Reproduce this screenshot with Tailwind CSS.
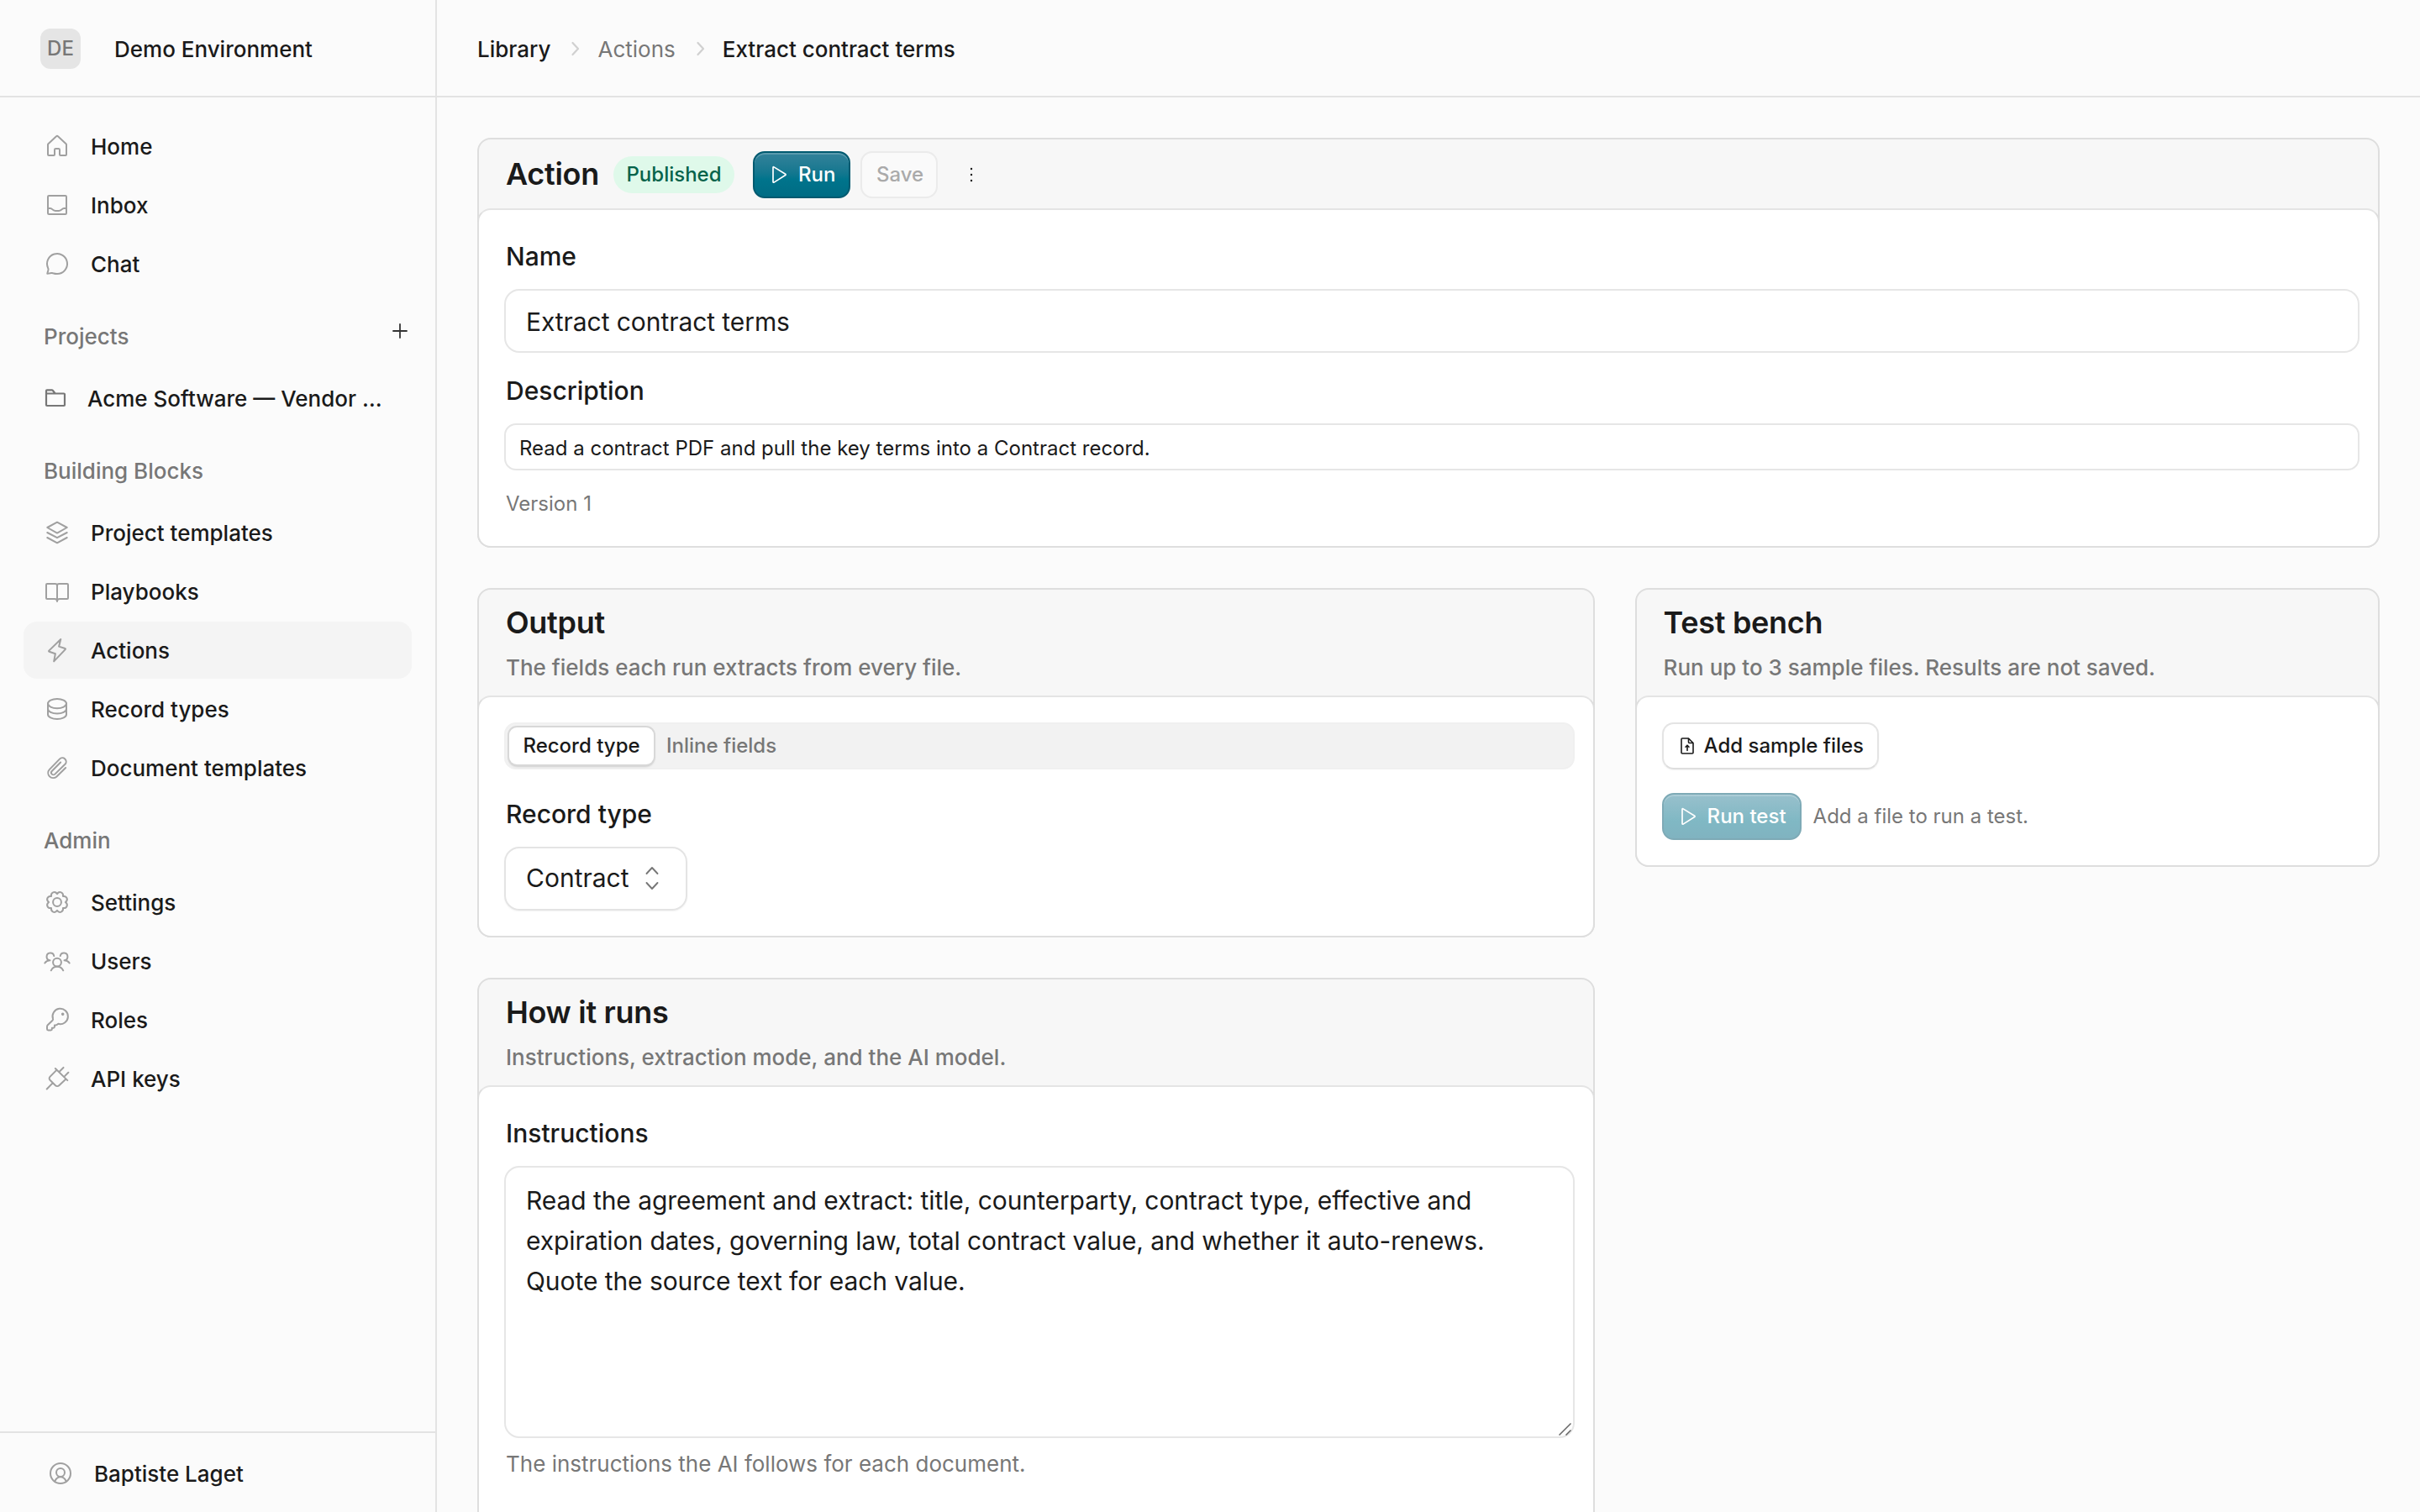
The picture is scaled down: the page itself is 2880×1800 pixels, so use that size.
<!DOCTYPE html>
<html lang="en">
<head>
  <meta charset="UTF-8">
  <meta name="viewport" content="width=device-width, initial-scale=1">
  <title>Extract contract terms</title>
  <script src="https://cdn.jsdelivr.net/npm/@tailwindcss/browser@4"></script>
</head>
<body class="flex h-screen overflow-hidden bg-[#fbfbfb] font-['Inter',sans-serif] text-[26px] leading-9 text-[#1a1a1a]">

  <!-- Sidebar -->
  <aside class="flex w-[520px] shrink-0 flex-col border-r-2 border-[#e3e3e3] font-medium">
    <div class="flex h-[116px] items-center border-b-2 border-[#e3e3e3] pt-0.5 pl-12">
      <div class="flex size-12 items-center justify-center rounded-xl bg-[#e5e5e5] text-2xl text-[#777]">DE</div>
      <div class="ml-10 pt-0.5">Demo Environment</div>
    </div>

    <nav class="flex flex-1 flex-col px-7 pt-6">
      <div class="flex flex-col gap-0.5">
        <a class="flex h-[68px] items-center gap-6 rounded-2xl px-6">
          <svg class="size-8 shrink-0 text-[#a0a0a0]" viewBox="0 0 24 24" fill="none" stroke="currentColor" stroke-width="1.5" stroke-linecap="round" stroke-linejoin="round"><path d="M3.75 10.6a1 1 0 0 1 .3-.7l7.25-6.7a1 1 0 0 1 1.4 0l7.25 6.7a1 1 0 0 1 .3.7v8.9a.75.75 0 0 1-.75.75h-4.5a.75.75 0 0 1-.75-.75v-4.25a1 1 0 0 0-1-1h-2.5a1 1 0 0 0-1 1v4.25a.75.75 0 0 1-.75.75H4.5a.75.75 0 0 1-.75-.75z"/></svg>
          <span class="pt-0.5">Home</span>
        </a>
        <a class="flex h-[68px] items-center gap-6 rounded-2xl px-6">
          <svg class="size-8 shrink-0 text-[#a0a0a0]" viewBox="0 0 24 24" fill="none" stroke="currentColor" stroke-width="1.5" stroke-linecap="round" stroke-linejoin="round"><rect x="3.75" y="3.75" width="16.5" height="16.5" rx=".9"/><path d="M3.75 15h2.1c.8 0 1.3.3 1.8.9.7.8 1.6 1.35 2.8 1.35h3.1c1.2 0 2.1-.55 2.8-1.35.5-.6 1-.9 1.8-.9h2.1"/></svg>
          <span class="pt-0.5">Inbox</span>
        </a>
        <a class="flex h-[68px] items-center gap-6 rounded-2xl px-6">
          <svg class="size-8 shrink-0 text-[#a0a0a0]" viewBox="0 0 24 24" fill="none" stroke="currentColor" stroke-width="1.5" stroke-linecap="round" stroke-linejoin="round"><path d="M12 21a9 9 0 1 0-8.1-5.1c.3.5.3 1 .2 1.5l-.9 3.5 3.7-.7c.5-.1 1 0 1.5.2 1.1.4 2.3.6 3.6.6z"/></svg>
          <span class="pt-0.5">Chat</span>
        </a>
      </div>

      <div class="flex h-[92px] items-start justify-between pr-1 pl-6 text-[#777]">
        <span class="mt-[35px]">Projects</span>
        <svg class="mt-[36px] size-5 text-[#333]" viewBox="0 0 20 20" fill="none" stroke="currentColor" stroke-width="1.8" stroke-linecap="round"><path d="M10 2v16M2 10h16"/></svg>
      </div>
      <a class="flex h-[68px] items-center gap-6 rounded-2xl px-6">
        <svg class="size-7 shrink-0 text-[#777]" viewBox="0 0 28 28" fill="none" stroke="currentColor" stroke-width="2.2" stroke-linejoin="round"><path d="M3 8.5V5.3c0-.5.4-.9.9-.9h6c.3 0 .6.1.8.3l3 3.8H24c.6 0 1 .4 1 1V22c0 .6-.4 1-1 1H4c-.6 0-1-.4-1-1zM3 8.5h10.5"/></svg>
        <span class="pt-0.5">Acme Software — Vendor …</span>
      </a>

      <div class="h-[92px] pt-[35px] pl-6 text-[#777]">Building Blocks</div>
      <div class="flex flex-col gap-0.5">
        <a class="flex h-[68px] items-center gap-6 rounded-2xl px-6">
          <svg class="size-8 shrink-0 text-[#a0a0a0]" viewBox="0 0 24 24" fill="none" stroke="currentColor" stroke-width="1.5" stroke-linecap="round" stroke-linejoin="round"><path d="M12 2.8l8.8 4.7-8.8 4.9-8.8-4.9zM3.2 12l8.8 4.6 8.8-4.6M3.2 16.5l8.8 4.7 8.8-4.7"/></svg>
          <span class="pt-0.5">Project templates</span>
        </a>
        <a class="flex h-[68px] items-center gap-6 rounded-2xl px-6">
          <svg class="size-8 shrink-0 text-[#a0a0a0]" viewBox="0 0 24 24" fill="none" stroke="currentColor" stroke-width="1.5" stroke-linecap="round" stroke-linejoin="round"><path d="M12 7c0-1-.8-1.75-1.75-1.75H3a.75.75 0 0 0-.75.75v12c0 .4.3.75.75.75h6.75c1.2 0 2.25.8 2.25 1.9 0-1.1 1-1.9 2.25-1.9H21c.4 0 .75-.3.75-.75V6a.75.75 0 0 0-.75-.75h-7.25C12.8 5.25 12 6 12 7zm0 0v14"/></svg>
          <span class="pt-0.5">Playbooks</span>
        </a>
        <a class="flex h-[68px] items-center gap-6 rounded-2xl bg-[#f4f4f4] px-6">
          <svg class="size-8 shrink-0 text-[#a0a0a0]" viewBox="0 0 24 24" fill="none" stroke="currentColor" stroke-width="1.5" stroke-linecap="round" stroke-linejoin="round"><path d="M15.2 2.3l-1.6 6.4 5.5 1.8c.4.1.5.5.2.8L9.1 22l1.3-6.8-5.5-1.9c-.4-.1-.5-.5-.2-.8z"/></svg>
          <span class="pt-0.5">Actions</span>
        </a>
        <a class="flex h-[68px] items-center gap-6 rounded-2xl px-6">
          <svg class="size-8 shrink-0 text-[#a0a0a0]" viewBox="0 0 24 24" fill="none" stroke="currentColor" stroke-width="1.5" stroke-linecap="round" stroke-linejoin="round"><ellipse cx="12" cy="7.2" rx="8.25" ry="4.2"/><path d="M3.75 7.2v9.6c0 2.3 3.7 4.2 8.25 4.2s8.25-1.9 8.25-4.2V7.2M3.75 12c0 2.3 3.7 4.2 8.25 4.2s8.25-1.9 8.25-4.2"/></svg>
          <span class="pt-0.5">Record types</span>
        </a>
        <a class="flex h-[68px] items-center gap-6 rounded-2xl px-6">
          <svg class="size-8 shrink-0 text-[#a0a0a0]" viewBox="0 0 24 24" fill="none" stroke="currentColor" stroke-width="1.5" stroke-linecap="round" stroke-linejoin="round"><path d="M19.6 12l-8.2 8a4.5 4.5 0 0 1-6.3-6.4l9.1-9.4a3.3 3.3 0 0 1 4.9 4.6L10 17.7a1.9 1.9 0 0 1-2.7-2.7l7.8-7.9"/></svg>
          <span class="pt-0.5">Document templates</span>
        </a>
      </div>

      <div class="h-[92px] pt-[35px] pl-6 text-[#777]">Admin</div>
      <div class="flex flex-col gap-0.5">
        <a class="flex h-[68px] items-center gap-6 rounded-2xl px-6">
          <svg class="size-8 shrink-0 text-[#a0a0a0]" viewBox="0 0 24 24" fill="none" stroke="currentColor" stroke-width="1.5" stroke-linejoin="round"><path d="M19.4 12C22.27 13.99 20.67 17.87 17.23 17.23 17.87 20.67 13.99 22.27 12 19.4 10.01 22.27 6.13 20.67 6.77 17.23 3.33 17.87 1.73 13.99 4.6 12 1.73 10.01 3.33 6.13 6.77 6.77 6.13 3.33 10.01 1.73 12 4.6 13.99 1.73 17.87 3.33 17.23 6.77 20.67 6.13 22.27 10.01 19.4 12z"/><circle cx="12" cy="12" r="3.7"/></svg>
          <span class="pt-0.5">Settings</span>
        </a>
        <a class="flex h-[68px] items-center gap-6 rounded-2xl px-6">
          <svg class="size-8 shrink-0 text-[#a0a0a0]" viewBox="0 0 24 24" fill="none" stroke="currentColor" stroke-width="1.5" stroke-linecap="round" stroke-linejoin="round"><circle cx="12" cy="13.2" r="3.7"/><path d="M6.6 20.5c.9-2.1 3-3.5 5.4-3.5s4.5 1.4 5.4 3.5M9.2 7.6a3.3 3.3 0 1 0-3.6 3.9M5.6 11.5c-2 0-3.6.9-4.6 2.4M14.8 7.6a3.3 3.3 0 1 1 3.6 3.9M18.4 11.5c2 0 3.6.9 4.6 2.4"/></svg>
          <span class="pt-0.5">Users</span>
        </a>
        <a class="flex h-[68px] items-center gap-6 rounded-2xl px-6">
          <svg class="size-8 shrink-0 text-[#a0a0a0]" viewBox="0 0 24 24" fill="none" stroke="currentColor" stroke-width="1.5" stroke-linecap="round" stroke-linejoin="round"><path d="M8.3 11.3a6.9 6.9 0 1 1 4.6 4.3c-.6.9-1.3 1.2-2.2 1.2h-1v1.4c0 .6-.5 1.1-1 1.1H7.4v1c0 .6-.4 1-1 1H4c-.6 0-1-.4-1-1v-2.2c0-.5.2-1 .6-1.4l4.3-4.2c.5-.5.6-.8.4-1.2z"/><circle cx="17" cy="7" r=".6" fill="currentColor"/></svg>
          <span class="pt-0.5">Roles</span>
        </a>
        <a class="flex h-[68px] items-center gap-6 rounded-2xl px-6">
          <svg class="size-8 shrink-0 text-[#a0a0a0]" viewBox="0 0 24 24" fill="none" stroke="currentColor" stroke-width="1.5" stroke-linecap="round" stroke-linejoin="round"><path d="M10.4 3l10.8 10.6M17.6 2.2l-3.2 3.2M22 6.6l-3.4 3.4M11.5 4.4l-5.9 6c-.8.8-.8 2.1 0 2.9l4.9 4.9c.8.8 2.4.8 3.2 0l6.2-5.8M7.8 16.2l-5 5.2"/></svg>
          <span class="pt-0.5">API keys</span>
        </a>
      </div>
    </nav>

    <div class="flex h-24 items-start gap-6 border-t-2 border-[#e3e3e3] pt-8 pl-14">
      <svg class="size-8 shrink-0 text-[#a0a0a0]" viewBox="0 0 24 24" fill="none" stroke="currentColor" stroke-width="1.5" stroke-linecap="round"><circle cx="12" cy="12" r="9"/><circle cx="12" cy="11.2" r="3.75"/><path d="M7 18.9c1.1-2.3 2.9-3.7 5-3.7s3.9 1.4 5 3.7"/></svg>
      <span class="-mt-px">Baptiste Laget</span>
    </div>
  </aside>

  <div class="flex min-w-0 flex-1 flex-col">
    <!-- Breadcrumb -->
    <header class="flex h-[116px] shrink-0 items-center gap-4 border-b-2 border-[#e3e3e3] pt-0.5 pl-12 font-medium">
      <span class="pt-0.5">Library</span>
      <svg class="size-6 text-[#d0d0d0]" viewBox="0 0 24 24" fill="none" stroke="currentColor" stroke-width="2.2" stroke-linecap="round" stroke-linejoin="round"><path d="M10.5 5l6.5 7-6.5 7"/></svg>
      <span class="pt-0.5 font-normal text-[#777]">Actions</span>
      <svg class="size-6 text-[#d0d0d0]" viewBox="0 0 24 24" fill="none" stroke="currentColor" stroke-width="2.2" stroke-linecap="round" stroke-linejoin="round"><path d="M10.5 5l6.5 7-6.5 7"/></svg>
      <span class="pt-0.5">Extract contract terms</span>
    </header>

    <main class="flex flex-1 flex-col gap-12 overflow-hidden p-12">
      <!-- Action -->
      <section class="shrink-0 rounded-2xl border-2 border-[#dedede] bg-[#f7f7f7]">
        <div class="flex h-[82px] items-center pt-0.5 pl-8">
          <h1 class="w-28 pb-0.5 text-4xl font-semibold tracking-[-0.3px]">Action</h1>
          <span class="ml-4 flex h-11 w-36 items-center justify-center rounded-full bg-[#dff9ea] text-2xl font-medium text-[#06634a]">Published</span>
          <button class="ml-[22px] flex h-14 w-[116px] items-center gap-[9px] rounded-[14px] border-2 border-[#005a70] bg-linear-to-b from-[#32829a] via-[#00748c] via-60% to-[#006c84] pl-[15px] text-2xl font-medium text-white inset-shadow-[0_2px_0_rgb(255_255_255/0.2)]">
            <svg class="size-7" viewBox="0 0 28 28" fill="none" stroke="currentColor" stroke-width="1.7" stroke-linejoin="round"><path d="M7 5.5c0-.6.6-1 1.1-.6l13.6 8.4c.5.3.5 1 0 1.3L8.1 23.1c-.5.3-1.1 0-1.1-.6z"/></svg>
            Run
          </button>
          <button class="ml-3 flex h-14 w-[92px] items-center justify-center rounded-[14px] border-2 border-[#ebebeb] bg-[#fafafa] pl-0.5 text-2xl font-medium text-[#aaa]">Save</button>
          <button class="ml-[14px] flex size-[52px] items-center justify-center">
            <svg class="size-6" viewBox="0 0 24 24" fill="currentColor"><circle cx="12" cy="5" r="1.2"/><circle cx="12" cy="12" r="1.2"/><circle cx="12" cy="19" r="1.2"/></svg>
          </button>
        </div>
        <div class="-mx-0.5 -mb-0.5 rounded-2xl border-2 border-[#dedede] border-t-[#e4e4e4] bg-white px-[30px] pb-8">
          <label class="mt-[34px] block pl-0.5 text-3xl leading-[42px] font-medium">Name</label>
          <input type="text" value="Extract contract terms" class="mt-[18px] block h-[76px] w-[2208px] rounded-[18px] border-2 border-[#e6e6e6] px-6 pt-0.5 text-3xl tracking-[-0.07px]">
          <label class="mt-6 block pl-0.5 text-3xl leading-[42px] font-medium">Description</label>
          <input type="text" value="Read a contract PDF and pull the key terms into a Contract record." class="mt-[18px] block h-14 w-[2208px] rounded-[14px] border-2 border-[#e6e6e6] px-4 pt-0.5 text-2xl">
          <p class="mt-[21px] pl-0.5 text-2xl leading-[37px] text-[#777]">Version 1</p>
        </div>
      </section>

      <div class="grid shrink-0 grid-cols-[3fr_2fr] items-start gap-12">
        <div class="flex flex-col gap-12">
          <!-- Output -->
          <section class="rounded-2xl border-2 border-[#dedede] bg-[#f7f7f7]">
            <div class="h-[126px] pt-3 pl-8">
              <h2 class="text-4xl leading-[54px] font-semibold tracking-[-0.3px]">Output</h2>
              <p class="mt-[9px] font-medium text-[#777]">The fields each run extracts from every file.</p>
            </div>
            <div class="-mx-0.5 -mb-0.5 rounded-2xl border-2 border-[#dedede] border-t-[#e4e4e4] bg-white py-[30px] pr-[22px] pl-[30px]">
              <div class="flex h-14 items-center rounded-[14px] border-2 border-[#f0f0f0] bg-[#f2f2f2] pl-1 text-2xl font-medium">
                <button class="h-11 w-[172px] rounded-[9px] bg-white shadow-[0_0_0_2px_#d8d8d8,0_2px_3px_rgb(0_0_0/0.3)]">Record type</button>
                <button class="ml-[15px] text-[#777]">Inline fields</button>
              </div>
              <label class="mt-8 block pl-0.5 text-3xl leading-[42px] font-medium">Record type</label>
              <button class="mt-[18px] flex h-[76px] w-[218px] items-center rounded-[18px] border-2 border-[#e4e4e4] pb-0.5 pl-6 text-3xl shadow-xs">
                Contract
                <svg class="ml-[11px] size-8 text-[#777]" viewBox="0 0 32 32" fill="none" stroke="currentColor" stroke-width="1.9" stroke-linecap="round" stroke-linejoin="round"><path d="M9.5 11l6.5-7 6.5 7M9.5 22l6.5 7 6.5-7"/></svg>
              </button>
            </div>
          </section>

          <!-- How it runs -->
          <section class="rounded-2xl border-2 border-[#dedede] bg-[#f7f7f7]">
            <div class="h-[126px] pt-3 pl-8">
              <h2 class="text-4xl leading-[54px] font-semibold tracking-[-0.3px]">How it runs</h2>
              <p class="mt-[9px] font-medium text-[#777]">Instructions, extraction mode, and the AI model.</p>
            </div>
            <div class="-mx-0.5 -mb-0.5 rounded-2xl border-2 border-[#dedede] border-t-[#e4e4e4] bg-white pr-[22px] pb-24 pl-[30px]">
              <label class="mt-[34px] block pl-0.5 text-3xl leading-[42px] font-medium">Instructions</label>
              <div class="relative mt-[18px]">
                <textarea spellcheck="false" class="block h-[324px] w-full resize-none rounded-[18px] border-2 border-[#e6e6e6] px-6 pt-[15px] text-3xl leading-[48px] tracking-[-0.07px]">Read the agreement and extract: title, counterparty, contract type, effective and expiration dates, governing law, total contract value, and whether it auto-renews. Quote the source text for each value.</textarea>
                <svg class="absolute right-[3px] bottom-[3px] size-4 text-[#666]" viewBox="0 0 16 16" fill="none" stroke="currentColor" stroke-width="1.5"><path d="M.5 15.5l14-14M8.5 15.5l6-6"/></svg>
              </div>
              <p class="mt-[13px] pl-0.5 text-[#777]">The instructions the AI follows for each document.</p>
            </div>
          </section>
        </div>

        <!-- Test bench -->
        <section class="rounded-2xl border-2 border-[#dedede] bg-[#f7f7f7]">
          <div class="h-[126px] pt-3 pl-8">
            <h2 class="text-4xl leading-[54px] font-semibold tracking-[-0.3px]">Test bench</h2>
            <p class="mt-[9px] font-medium text-[#777]">Run up to 3 sample files. Results are not saved.</p>
          </div>
          <div class="-mx-0.5 -mb-0.5 rounded-2xl border-2 border-[#dedede] border-t-[#e4e4e4] bg-white p-[30px]">
            <button class="flex h-14 w-[258px] items-center gap-2 rounded-[14px] border-2 border-[#e4e4e4] border-b-[#dedede] pl-4 text-2xl font-medium shadow-xs">
              <svg class="size-6" viewBox="0 0 24 24" fill="none" stroke="currentColor" stroke-width="1.6" stroke-linecap="round" stroke-linejoin="round"><path d="M13.5 3H6c-.6 0-1 .4-1 1v16c0 .6.4 1 1 1h12c.6 0 1-.4 1-1V8.5zv4.500c0 .6.4 1 1 1H19M12 17.500v-6M10 13.200l2-2 2 2"/></svg>
              Add sample files
            </button>
            <div class="mt-7 flex items-center gap-3.5">
              <button class="flex h-14 w-[166px] items-center gap-[9px] rounded-[14px] border-2 border-[#7eaab6] bg-linear-to-b from-[#98c0cc] via-[#80b8c4] via-60% to-[#80b3c0] pl-[15px] text-2xl font-medium text-white inset-shadow-[0_2px_0_rgb(255_255_255/0.2)]">
                <svg class="size-7" viewBox="0 0 28 28" fill="none" stroke="currentColor" stroke-width="1.7" stroke-linejoin="round"><path d="M7 5.5c0-.6.6-1 1.1-.6l13.6 8.4c.5.3.5 1 0 1.3L8.1 23.1c-.5.3-1.1 0-1.1-.6z"/></svg>
                Run test
              </button>
              <span class="text-2xl text-[#777]">Add a file to run a test.</span>
            </div>
          </div>
        </section>
      </div>
    </main>
  </div>
</body>
</html>
